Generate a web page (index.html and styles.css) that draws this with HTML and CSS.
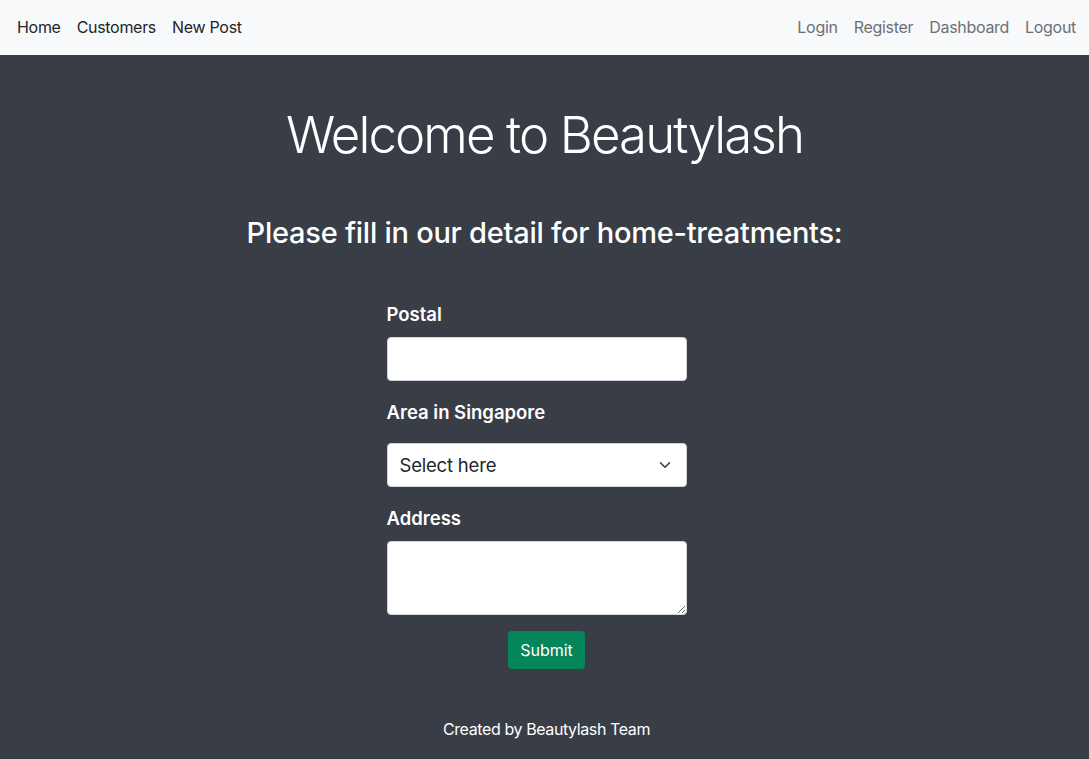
FILE: index.html
```html
<!DOCTYPE html>
<html lang="en">
<head>
<meta charset="utf-8">
<title>Beautylash</title>
<link rel="stylesheet" href="styles.css">
</head>
<body>
<nav class="navbar">
  <ul class="nav nav-left">
    <li><a class="nav-link dark" href="#">Home</a></li>
    <li><a class="nav-link dark" href="#">Customers</a></li>
    <li><a class="nav-link dark" href="#">New Post</a></li>
  </ul>
  <ul class="nav nav-right">
    <li><a class="nav-link muted" href="#">Login</a></li>
    <li><a class="nav-link muted" href="#">Register</a></li>
    <li><a class="nav-link muted" href="#">Dashboard</a></li>
    <li><a class="nav-link muted" href="#">Logout</a></li>
  </ul>
</nav>
<main class="main">
  <h1 class="title">Welcome to Beautylash</h1>
  <h2 class="subtitle">Please fill in our detail for home-treatments:</h2>
  <form class="form">
    <label class="label first" for="postal">Postal</label>
    <input class="control" id="postal" type="text">
    <label class="label" for="area">Area in Singapore</label>
    <div class="select-wrap">
      <select class="control select" id="area">
        <option>Select here</option>
      </select>
      <svg class="chev" width="12" height="12" viewBox="0 0 16 16"><path d="M2 5l6 6 6-6" fill="none" stroke="#343a40" stroke-width="2" stroke-linecap="round" stroke-linejoin="round"/></svg>
    </div>
    <label class="label" for="address">Address</label>
    <textarea class="control area" id="address"></textarea>
    <div class="actions"><button class="btn" type="button">Submit</button></div>
  </form>
  <footer class="footer">Created by Beautylash Team</footer>
</main>
</body>
</html>
```
FILE: styles.css
```css
* { box-sizing: border-box; }
html, body { margin: 0; padding: 0; }
body {
  font-family: Inter, "Noto Sans", "Liberation Sans", sans-serif;
  background: #383d46;
  color: #fff;
  min-height: 759px;
}
.navbar {
  height: 55px;
  background: #f8f9fa;
  display: flex;
  justify-content: space-between;
  align-items: center;
  padding: 0 5px 0 9px;
}
.nav { list-style: none; margin: 0; padding: 0; display: flex; }
.nav-link {
  display: block;
  padding: 7px 8px 9px;
  font-size: 16px;
  line-height: 24px;
  letter-spacing: -0.3px;
  text-decoration: none;
}
.dark { color: #212529; }
.muted { color: #6c7075; }
.main { display: flex; flex-direction: column; align-items: center; }
.title {
  margin: 48px 0 0;
  font-size: 51px;
  font-weight: 300;
  line-height: 64px;
  letter-spacing: -1.9px;
}
.subtitle {
  margin: 48px 0 0;
  font-size: 29px;
  font-weight: 500;
  line-height: 36px;
  letter-spacing: -0.25px;
}
.form { width: 300px; margin: 50px 16px 0 0; display: flex; flex-direction: column; }
.label {
  font-size: 18.5px;
  font-weight: 600;
  line-height: 26px;
  letter-spacing: 0;
  margin-top: 18px;
  margin-bottom: 10px;
}
.label.first { margin-top: 0; }
.control {
  width: 300px;
  height: 44px;
  border: 1px solid #ced4da;
  border-radius: 4px;
  background: #fff;
  font-family: inherit;
  font-size: 18.5px;
  letter-spacing: -0.2px;
  color: #212529;
  padding: 0 12px;
  margin: 0;
  display: block;
}
.select-wrap { position: relative; margin-top: 8px; }
.select { appearance: none; -webkit-appearance: none; }
.chev { position: absolute; right: 16px; top: 16px; pointer-events: none; }
.area { height: 74px; resize: vertical; padding: 8px 12px; }
.actions { display: flex; justify-content: center; margin: 16px -20px 0 0; }
.btn {
  background: #03875a;
  color: #fff;
  border: none;
  border-radius: 4px;
  width: 77px;
  height: 38px;
  font-family: inherit;
  font-size: 16px;
  padding: 0;
}
.footer {
  margin-top: 48px;
  margin-left: 4px;
  font-size: 16px;
  line-height: 24px;
  letter-spacing: -0.4px;
}
```
